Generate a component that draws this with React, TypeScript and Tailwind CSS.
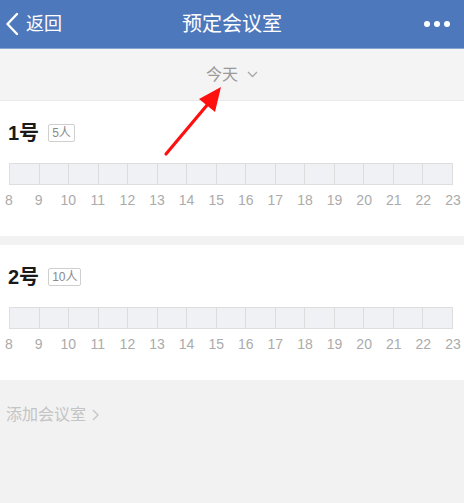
import React from "react";

const hours = Array.from({ length: 16 }, (_, i) => 8 + i);
const font = { fontFamily: '"Liberation Sans", "Noto Sans CJK SC", sans-serif' };

function Room({ name, cap }: { name: string; cap: string }) {
  return (
    <div className="bg-white pt-[20px] pb-[27px]">
      <div className="flex items-center h-[24px] pl-[8px]">
        <span className="text-[20px] font-bold text-[#1a1a1a] leading-none">{name}</span>
        <span className="ml-[9px] border border-[#cfcfcf] rounded-[2px] text-[12px] text-[#8a8a8a] leading-none px-[3px] py-[2px]">
          {cap}
        </span>
      </div>
      <div className="mt-[18px] ml-[9px] w-[444px] h-[22px] flex border border-[#dedede] bg-[#f0f1f5]">
        {Array.from({ length: 15 }, (_, i) => (
          <div key={i} className={`flex-1 ${i < 14 ? "border-r border-[#dcdcdc]" : ""}`} />
        ))}
      </div>
      <div className="mt-[6px] ml-[9px] w-[444px] h-[18px] flex justify-between">
        {hours.map((h) => (
          <div key={h} className="w-0 flex justify-center overflow-visible">
            <span className="text-[14px] text-[#ababab] leading-[18px] whitespace-nowrap">{h}</span>
          </div>
        ))}
      </div>
    </div>
  );
}

export default function App() {
  return (
    <div className="w-[464px] h-[503px] bg-[#f2f2f2] relative overflow-hidden" style={font}>
      <div className="h-[49px] bg-[#4e78bc] border-b border-[#86a3d4] flex items-center justify-between px-[5px] relative">
        <div className="flex items-center text-white">
          <svg width="14" height="24" viewBox="0 0 14 24">
            <path d="M12 2 L2.5 12 L12 22" stroke="white" strokeWidth="2.4" fill="none" strokeLinecap="round" strokeLinejoin="round" />
          </svg>
          <span className="ml-[7px] text-[18px] leading-none">返回</span>
        </div>
        <div className="absolute left-0 right-0 text-center text-white text-[20px] leading-none pointer-events-none">
          预定会议室
        </div>
        <div className="flex items-center gap-[4px] mr-[9px]">
          <span className="w-[6px] h-[6px] rounded-full bg-white" />
          <span className="w-[6px] h-[6px] rounded-full bg-white" />
          <span className="w-[6px] h-[6px] rounded-full bg-white" />
        </div>
      </div>
      <div className="h-[52px] bg-[#f4f4f4] border-b border-[#e9e9e9] flex items-center justify-center">
        <span className="text-[16px] text-[#9a9a9a] leading-none">今天</span>
        <svg className="ml-[9px]" width="11" height="7" viewBox="0 0 11 7">
          <path d="M1 1 L5.5 5.5 L10 1" stroke="#a8a8a8" strokeWidth="1.3" fill="none" />
        </svg>
      </div>
      <Room name="1号" cap="5人" />
      <div className="h-[9px]" />
      <Room name="2号" cap="10人" />
      <div className="pt-[27px] pl-[6px] flex items-center">
        <span className="text-[16px] text-[#c4c4c4] leading-none">添加会议室</span>
        <svg className="ml-[6px]" width="7" height="12" viewBox="0 0 7 12">
          <path d="M1 1 L6 6 L1 11" stroke="#c4c4c4" strokeWidth="1.3" fill="none" />
        </svg>
      </div>
      <svg className="absolute left-0 top-0 pointer-events-none" width="464" height="503">
        <line x1="166" y1="154" x2="208" y2="104" stroke="#ff1010" strokeWidth="3.2" strokeLinecap="round" />
        <polygon points="221,87 215,112 199,99" fill="#ff1010" />
      </svg>
    </div>
  );
}
